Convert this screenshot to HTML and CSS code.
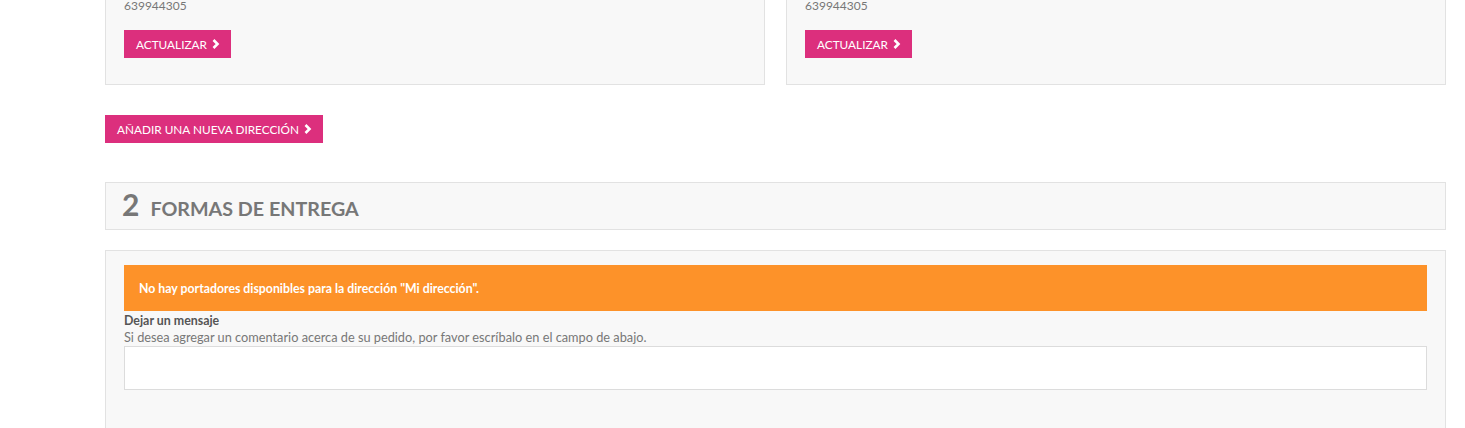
FILE: index.html
```html
<!DOCTYPE html>
<html lang="es">
<head>
    <meta charset="UTF-8">
    <title>Pedido</title>
    <link rel="stylesheet" href="styles.css">
</head>
<body>
    <div class="page">
        <!-- Direcciones -->
        <div class="addresses">
            <div class="address-card">
                <p class="phone">639944305</p>
                <a class="btn" href="#">ACTUALIZAR <svg class="chev" viewBox="0 0 8 10"><polyline points="1.5,1 5.5,5 1.5,9"/></svg></a>
            </div>
            <div class="address-card">
                <p class="phone">639944305</p>
                <a class="btn" href="#">ACTUALIZAR <svg class="chev" viewBox="0 0 8 10"><polyline points="1.5,1 5.5,5 1.5,9"/></svg></a>
            </div>
        </div>

        <a class="btn btn-new" href="#">AÑADIR UNA NUEVA DIRECCIÓN <svg class="chev" viewBox="0 0 8 10"><polyline points="1.5,1 5.5,5 1.5,9"/></svg></a>

        <!-- Paso 2 -->
        <div class="step-title">
            <span class="step-num">2</span>
            <span class="step-name">FORMAS DE ENTREGA</span>
        </div>

        <div class="step-box">
            <p class="alert">No hay portadores disponibles para la dirección "Mi dirección".</p>
            <p class="label">Dejar un mensaje</p>
            <p class="hint">Si desea agregar un comentario acerca de su pedido, por favor escríbalo en el campo de abajo.</p>
            <textarea class="message"></textarea>
        </div>
    </div>
</body>
</html>
```

FILE: styles.css
```css
* {
    box-sizing: border-box;
    margin: 0;
    padding: 0;
}
html, body {
    height: 428px;
    overflow: hidden;
}
body {
    font-family: Lato, "Open Sans", sans-serif;
    font-size: 12px;
    color: #777;
    background: #fff;
}
.page {
    width: 1341px;
    margin-left: 105px;
}
.addresses {
    display: flex;
    gap: 21px;
    margin-top: -20px;
}
.address-card {
    flex: 1;
    background: #f8f8f8;
    border: 1px solid #e2e2e2;
    padding: 18px 18px 26px;
}
.phone {
    line-height: 14px;
    margin-bottom: 17px;
}
.btn {
    display: inline-flex;
    align-items: center;
    gap: 5px;
    height: 28px;
    padding: 0 11px 0 12px;
    background: #dc2f7d;
    color: #fff;
    font-size: 11.8px;
    text-decoration: none;
}
.chev {
    width: 8px;
    height: 10px;
    fill: none;
    stroke: #fff;
    stroke-width: 2.6;
}
.btn-new {
    margin-top: 30px;
}
.step-title {
    display: flex;
    align-items: baseline;
    gap: 11px;
    height: 48px;
    margin-top: 39px;
    padding: 0 16px;
    background: #f8f8f8;
    border: 1px solid #e2e2e2;
    color: #777;
    font-weight: bold;
    line-height: 42px;
}
.step-num {
    font-size: 30px;
}
.step-name {
    font-size: 19.7px;
}
.step-box {
    margin-top: 20px;
    height: 190px;
    padding: 14px 18px;
    background: #f8f8f8;
    border: 1px solid #e2e2e2;
}
.alert {
    height: 46px;
    line-height: 48px;
    padding: 0 15px;
    background: #fd9229;
    color: #fff;
    font-size: 12.3px;
    font-weight: bold;
}
.label {
    margin-top: 2px;
    color: #555;
    font-size: 12.4px;
    font-weight: bold;
    line-height: 16px;
}
.hint {
    font-size: 12.75px;
    line-height: 17px;
}
.message {
    display: block;
    width: 100%;
    height: 44px;
    background: #fff;
    border: 1px solid #dcdcdc;
    resize: none;
}
```
